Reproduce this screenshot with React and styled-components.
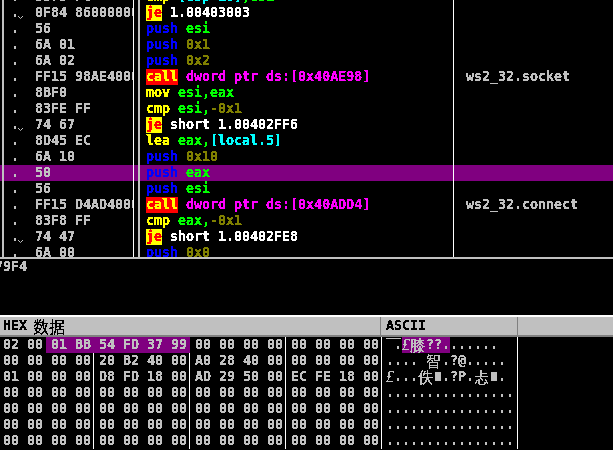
import React from 'react';
import styled, { createGlobalStyle } from 'styled-components';

const GlobalStyle = createGlobalStyle`
  html, body {
    margin: 0;
    padding: 0;
    background: #000;
  }
`;

const monoFont = `"DejaVu Sans Mono", "Liberation Mono", monospace`;
const cjkFont = `"Noto Sans CJK SC", "DejaVu Sans", sans-serif`;

const tokenColors = {
  push: { color: '#0000ff' },
  reg: { color: '#00ff00' },
  num: { color: '#808000' },
  mem: { color: '#00ffff' },
  ptr: { color: '#ff00ff' },
  op: { color: '#ffff00' },
  addr: { color: '#ffffff' },
  call: { color: '#ffff00', background: '#ff0000' },
  je: { color: '#ff0000', background: '#ffff00' },
};

const disasm = [
  { bytes: '3975 FC', code: [['op', 'cmp '], ['mem', '[ebp-10]'], ['reg', ',esi']] },
  { jump: true, bytes: '0F84 86000000', code: [['je', 'je'], ['addr', ' 1.00403003']] },
  { bytes: '56', code: [['push', 'push '], ['reg', 'esi']] },
  { bytes: '6A 01', code: [['push', 'push '], ['num', '0x1']] },
  { bytes: '6A 02', code: [['push', 'push '], ['num', '0x2']] },
  { bytes: 'FF15 98AE4000', code: [['call', 'call'], ['ptr', ' dword ptr ds:[0x40AE98]']], note: 'ws2_32.socket' },
  { bytes: '8BF0', code: [['op', 'mov '], ['reg', 'esi,eax']] },
  { bytes: '83FE FF', code: [['op', 'cmp '], ['reg', 'esi,'], ['num', '-0x1']] },
  { jump: true, bytes: '74 67', code: [['je', 'je'], ['addr', ' short 1.00402FF6']] },
  { bytes: '8D45 EC', code: [['op', 'lea '], ['reg', 'eax,'], ['mem', '[local.5]']] },
  { bytes: '6A 10', code: [['push', 'push '], ['num', '0x10']] },
  { selected: true, bytes: '50', code: [['push', 'push '], ['reg', 'eax']] },
  { bytes: '56', code: [['push', 'push '], ['reg', 'esi']] },
  { bytes: 'FF15 D4AD4000', code: [['call', 'call'], ['ptr', ' dword ptr ds:[0x40ADD4]']], note: 'ws2_32.connect' },
  { bytes: '83F8 FF', code: [['op', 'cmp '], ['reg', 'eax,'], ['num', '-0x1']] },
  { jump: true, bytes: '74 47', code: [['je', 'je'], ['addr', ' short 1.00402FE8']] },
  { bytes: '6A 00', code: [['push', 'push '], ['num', '0x0']] },
];

const zeros = '00 00 00 00';
const dump = [
  ['02 00 01 BB', '54 FD 37 99', zeros, zeros],
  [zeros, '20 B2 40 00', 'A0 28 40 00', zeros],
  ['01 00 00 00', 'D8 FD 18 00', 'AD 29 50 00', 'EC FE 18 00'],
  [zeros, zeros, zeros, zeros],
  [zeros, zeros, zeros, zeros],
  [zeros, zeros, zeros, zeros],
  [zeros, zeros, zeros, zeros],
];

const dots = '................';

const Window = styled.div`
  width: 613px;
  height: 450px;
  overflow: hidden;
  display: flex;
  flex-direction: column;
  background: #000;
  color: #c0c0c0;
  font-family: ${monoFont};
  font-size: 13.3px;
  font-weight: bold;
  line-height: 16px;
  white-space: pre;
`;

// hard edge on the glyphs, the reference uses a bitmap font
const FilterDefs = styled.svg`
  position: absolute;
  width: 0;
  height: 0;
`;

const Glyphs = styled.span`
  display: inline-block;
  filter: url(#crisp);
`;

const DisasmPane = styled.div`
  height: 257px;
  flex: none;
  overflow: hidden;
  border-bottom: 2px solid #c0c0c0;
`;

const RowList = styled.div`
  margin-top: -11px;
`;

const Row = styled.div`
  display: flex;
  height: 16px;
  background: ${p => (p.$selected ? '#800080' : 'transparent')};
`;

const BytesCell = styled.div`
  flex: none;
  box-sizing: border-box;
  width: 132px;
  margin-left: 2px;
  border-left: 2px solid #c0c0c0;
  border-right: 1px solid #fff;
  display: flex;
  overflow: hidden;
`;

const Marker = styled.div`
  flex: none;
  width: 31px;
  padding-left: 7px;
  box-sizing: border-box;
  display: flex;
`;

const Dot = styled(Glyphs)`
  width: 5px;
`;

const Chevron = styled.svg`
  margin-top: 11px;
  margin-left: 2px;
`;

const CodeCell = styled.div`
  flex: none;
  box-sizing: border-box;
  width: 316px;
  margin-left: 4px;
  border-left: 2px solid #c0c0c0;
  border-right: 1px solid #fff;
  padding-left: 6px;
  overflow: hidden;
`;

const Token = styled.span`
  color: ${p => tokenColors[p.$kind].color};
  background: ${p => tokenColors[p.$kind].background || 'transparent'};
  display: inline-block;
  height: 16px;
`;

const NoteCell = styled.div`
  padding-left: 12px;
`;

const InfoPane = styled.div`
  height: 56px;
  flex: none;
  margin-left: -5px;
`;

const HexHeader = styled.div`
  flex: none;
  display: flex;
  height: 18px;
  border-top: 2px solid #fff;
  border-bottom: 2px solid #808080;
  background: #c0c0c0;
  color: #000;
`;

const HeaderCell = styled.div`
  flex: none;
  box-sizing: border-box;
  width: ${p => p.$width}px;
  padding-left: ${p => p.$pad}px;
  border-right: 1px solid #808080;
  display: flex;
  align-items: center;
`;

const HeaderWide = styled(Glyphs)`
  font-family: ${cjkFont};
  font-size: 16px;
  font-weight: normal;
  margin-left: 6px;
`;

const HexRow = styled.div`
  display: flex;
  height: 16px;
`;

const Group = styled.div`
  flex: none;
  box-sizing: border-box;
  width: ${p => (p.$first ? 94 : 96)}px;
  border-right: 1px solid #fff;
  display: flex;
`;

const Byte = styled.span`
  flex: none;
  box-sizing: border-box;
  width: ${p => (p.$lead ? 22 : 24)}px;
  padding-left: ${p => (p.$lead ? 3 : 5)}px;
  background: ${p => (p.$selected ? '#800080' : 'transparent')};
`;

const AsciiCell = styled.div`
  flex: none;
  box-sizing: border-box;
  width: 136px;
  padding-left: 4px;
  border-right: 1px solid #fff;
  display: flex;
`;

const AsciiMark = styled.span`
  background: #800080;
  display: flex;
`;

const Wide = styled(Glyphs)`
  flex: none;
  width: ${p => p.$w || 16}px;
  font-family: ${cjkFont};
  font-size: 15px;
  font-weight: normal;
  text-align: left;
`;

const Slant = styled(Glyphs)`
  flex: none;
  width: 8px;
  font-family: "Liberation Serif", serif;
  font-size: 16px;
  font-style: italic;
  font-weight: normal;
`;

const Block = styled.span`
  flex: none;
  width: 6px;
  height: 9px;
  margin: 3px 1px 0;
  background: #c0c0c0;
`;

const isSelected = (row, group, i) =>
  row === 0 && ((group === 0 && i >= 2) || group === 1);

const asciiRows = [
  <>
    <Wide $w={8}>￣</Wide><Glyphs>.</Glyphs>
    <AsciiMark>
      <Slant>£</Slant>
      <Wide>膝</Wide><Glyphs>??.</Glyphs>
    </AsciiMark>
    <Glyphs>......</Glyphs>
  </>,
  <>
    <Glyphs>.... </Glyphs>
    <Wide>智</Wide><Glyphs>.?@.....</Glyphs>
  </>,
  <>
    <Slant>£</Slant><Glyphs>...</Glyphs><Wide>佚</Wide>
    <Block /><Glyphs>.?P.</Glyphs><Wide>忐</Wide>
    <Block /><Glyphs>.</Glyphs>
  </>,
  <Glyphs>{dots}</Glyphs>,
  <Glyphs>{dots}</Glyphs>,
  <Glyphs>{dots}</Glyphs>,
  <Glyphs>{dots}</Glyphs>,
];

export default function App() {
  return (
    <Window>
      <GlobalStyle />
      <FilterDefs aria-hidden="true">
        <filter id="crisp" x="-10%" y="-10%" width="120%" height="120%" colorInterpolationFilters="sRGB">
          <feComponentTransfer>
            <feFuncA type="discrete" tableValues="0 1 1" />
          </feComponentTransfer>
        </filter>
      </FilterDefs>
      <DisasmPane>
        <RowList>
          {disasm.map((line, i) => (
            <Row key={i} $selected={line.selected}>
              <BytesCell>
                <Marker>
                  <Dot>.</Dot>
                  {line.jump && (
                    <Chevron width="5" height="3" viewBox="0 0 5 3">
                      <polyline points="0,0 2.5,2.5 5,0" fill="none" stroke="#c0c0c0" strokeWidth="1" />
                    </Chevron>
                  )}
                </Marker>
                <Glyphs>{line.bytes}</Glyphs>
              </BytesCell>
              <CodeCell>
                {line.code.map(([kind, text], j) => (
                  <Token key={j} $kind={kind}><Glyphs>{text}</Glyphs></Token>
                ))}
              </CodeCell>
              {line.note && <NoteCell><Glyphs>{line.note}</Glyphs></NoteCell>}
            </Row>
          ))}
        </RowList>
      </DisasmPane>
      <InfoPane><Glyphs>79F4</Glyphs></InfoPane>
      <HexHeader>
        <HeaderCell $width={381} $pad={3}>
          <Glyphs>HEX</Glyphs><HeaderWide>数据</HeaderWide>
        </HeaderCell>
        <HeaderCell $width={137} $pad={5}><Glyphs>ASCII</Glyphs></HeaderCell>
      </HexHeader>
      {dump.map((groups, r) => (
        <HexRow key={r}>
          {groups.map((group, g) => (
            <Group key={g} $first={g === 0}>
              {group.split(' ').map((b, i) => (
                <Byte key={i} $lead={g === 0 && i === 0} $selected={isSelected(r, g, i)}><Glyphs>{b}</Glyphs></Byte>
              ))}
            </Group>
          ))}
          <AsciiCell>{asciiRows[r]}</AsciiCell>
        </HexRow>
      ))}
    </Window>
  );
}
